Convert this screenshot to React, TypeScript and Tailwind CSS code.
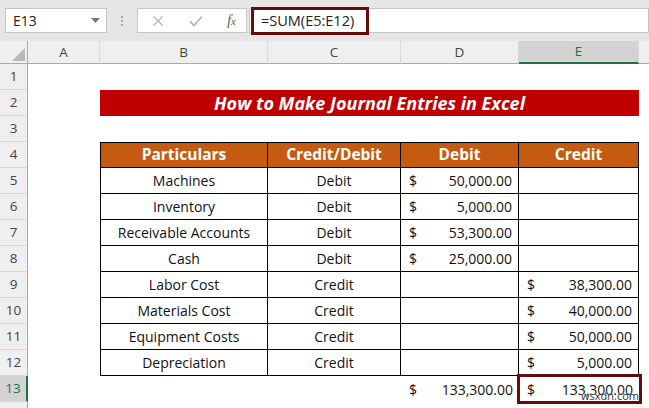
import React from 'react';

const COLS = [
  { key: 'A', w: 'w-[72px]' },
  { key: 'B', w: 'w-[168px]' },
  { key: 'C', w: 'w-[133px]' },
  { key: 'D', w: 'w-[118px]' },
  { key: 'E', w: 'w-[120px]' },
];

type Row = { name: string; type: string; debit?: string; credit?: string };

const rows: Row[] = [
  { name: 'Machines', type: 'Debit', debit: '50,000.00' },
  { name: 'Inventory', type: 'Debit', debit: '5,000.00' },
  { name: 'Receivable Accounts', type: 'Debit', debit: '53,300.00' },
  { name: 'Cash', type: 'Debit', debit: '25,000.00' },
  { name: 'Labor Cost', type: 'Credit', credit: '38,300.00' },
  { name: 'Materials Cost', type: 'Credit', credit: '40,000.00' },
  { name: 'Equipment Costs', type: 'Credit', credit: '50,000.00' },
  { name: 'Depreciation', type: 'Credit', credit: '5,000.00' },
];

function RowHead({ n, active }: { n?: number; active?: boolean }) {
  return (
    <div
      className={`w-[28px] h-full shrink-0 flex items-center justify-center text-[13.5px] border-b border-[#d9d9d9] ${
        active ? 'bg-[#d3d3d3] text-[#217346] border-r-2 border-r-[#217346]' : 'bg-[#efefef] text-[#444] border-r border-r-[#ababab]'
      }`}
    >
      {n}
    </div>
  );
}

function Money({ v }: { v?: string }) {
  if (!v) return null;
  return (
    <div className="flex justify-between w-full pl-[8px] pr-[6px]">
      <span>$</span>
      <span>{v}</span>
    </div>
  );
}

export default function App() {
  return (
    <div className="relative w-[649px] h-[408px] overflow-hidden bg-white text-[#111] font-['Open_Sans',sans-serif]">
      {/* formula bar */}
      <div className="h-[41px] bg-[#e6e6e6] flex items-start pt-[8px]">
        <div className="ml-[5px] w-[102px] h-[25px] bg-white border border-[#c6c6c6] flex items-center justify-between pl-[7px] pr-[6px] text-[14px] text-[#222]">
          <span>E13</span>
          <svg width="9" height="5" viewBox="0 0 9 5"><path d="M0 0h9L4.5 5z" fill="#777" /></svg>
        </div>
        <div className="w-[30px] h-[25px] flex flex-col items-center justify-center gap-[2px]">
          <span className="w-[2px] h-[2px] bg-[#aaa]" />
          <span className="w-[2px] h-[2px] bg-[#aaa]" />
          <span className="w-[2px] h-[2px] bg-[#aaa]" />
        </div>
        <div className="w-[110px] h-[25px] bg-white border border-[#c6c6c6] flex items-center pl-[14px] pr-[10px]">
          <svg width="12" height="12" viewBox="0 0 12 12"><path d="M1.5 1.5l9 9M10.5 1.5l-9 9" stroke="#b5b5b5" strokeWidth="1.3" /></svg>
          <svg className="ml-[25px]" width="14" height="12" viewBox="0 0 14 12"><path d="M1 6.5l4 4L13 1.5" stroke="#b5b5b5" strokeWidth="1.8" fill="none" /></svg>
          <span className="ml-auto text-[14px] italic font-['Liberation_Serif',serif] text-[#555]">
            f<span className="text-[11px]">x</span>
          </span>
        </div>
        <div className="relative flex-1 h-[25px] ml-[2px] bg-white border border-[#c6c6c6] flex items-center">
          <div className="absolute left-[1px] top-[-2px] w-[118px] h-[28px] border-[3px] border-[#650d0d]" />
          <span className="pl-[11px] text-[14.5px] text-[#222]">=SUM(E5:E12)</span>
        </div>
      </div>

      {/* column headers */}
      <div className="flex h-[23px] bg-[#efefef]">
        <div className="w-[28px] shrink-0 border-r border-b border-[#ababab] flex items-end justify-end p-[2px]">
          <svg width="13" height="13" viewBox="0 0 13 13"><path d="M13 0v13H0z" fill="#b9b9b9" /></svg>
        </div>
        {COLS.map((c) => (
          <div
            key={c.key}
            className={`${c.w} shrink-0 flex items-center justify-center text-[13.5px] border-r border-r-[#d9d9d9] ${
              c.key === 'E' ? 'bg-[#d3d3d3] text-[#217346] border-b-2 border-b-[#217346]' : 'text-[#444] border-b border-b-[#ababab]'
            }`}
          >
            {c.key}
          </div>
        ))}
        <div className="flex-1 border-b border-[#ababab]" />
      </div>

      {/* row 1 */}
      <div className="flex h-[26px]">
        <RowHead n={1} />
      </div>

      {/* row 2 title */}
      <div className="flex h-[26px]">
        <RowHead n={2} />
        <div className="w-[72px] shrink-0" />
        <div className="w-[539px] shrink-0 bg-[#c00000] flex items-center justify-center text-white italic font-bold text-[18px]">
          How to Make Journal Entries in Excel
        </div>
      </div>

      {/* row 3 */}
      <div className="flex h-[26px]">
        <RowHead n={3} />
      </div>

      {/* row 4 header */}
      <div className="flex h-[26px]">
        <RowHead n={4} />
        <div className="w-[72px] shrink-0" />
        {['Particulars', 'Credit/Debit', 'Debit', 'Credit'].map((h, i) => (
          <div
            key={h}
            className={`${['w-[168px] border-l', 'w-[133px]', 'w-[118px]', 'w-[120px]'][i]} shrink-0 bg-[#c55a11] text-white font-bold text-[15.5px] flex items-center justify-center border-t border-r border-b border-black`}
          >
            {h}
          </div>
        ))}
      </div>

      {/* rows 5-12 */}
      {rows.map((r, i) => (
        <div key={r.name} className="flex h-[26px] text-[14px]">
          <RowHead n={i + 5} />
          <div className="w-[72px] shrink-0" />
          <div className="w-[168px] shrink-0 border-l border-r border-b border-black flex items-center justify-center">{r.name}</div>
          <div className="w-[133px] shrink-0 border-r border-b border-black flex items-center justify-center">{r.type}</div>
          <div className="w-[118px] shrink-0 border-r border-b border-black flex items-center">
            <Money v={r.debit} />
          </div>
          <div className="w-[120px] shrink-0 border-r border-b border-black flex items-center">
            <Money v={r.credit} />
          </div>
        </div>
      ))}

      {/* row 13 totals */}
      <div className="flex h-[26px] text-[14px]">
        <RowHead n={13} active />
        <div className="w-[72px] shrink-0" />
        <div className="w-[168px] shrink-0" />
        <div className="w-[133px] shrink-0" />
        <div className="w-[118px] shrink-0 flex items-center">
          <Money v="133,300.00" />
        </div>
        <div className="relative w-[120px] shrink-0 flex items-center">
          <Money v="133,300.00" />
          <div className="absolute left-[-2px] right-[-3px] top-[-2px] bottom-[-2px] border-[3px] border-[#650d0d]" />
        </div>
      </div>

      {/* row 14 */}
      <div className="flex h-[26px]">
        <RowHead />
      </div>

      <span className="absolute left-[581px] top-[390px] text-[11px] leading-none text-[#333] [text-shadow:0_0_2px_#fff]">wsxdn.com</span>
    </div>
  );
}
